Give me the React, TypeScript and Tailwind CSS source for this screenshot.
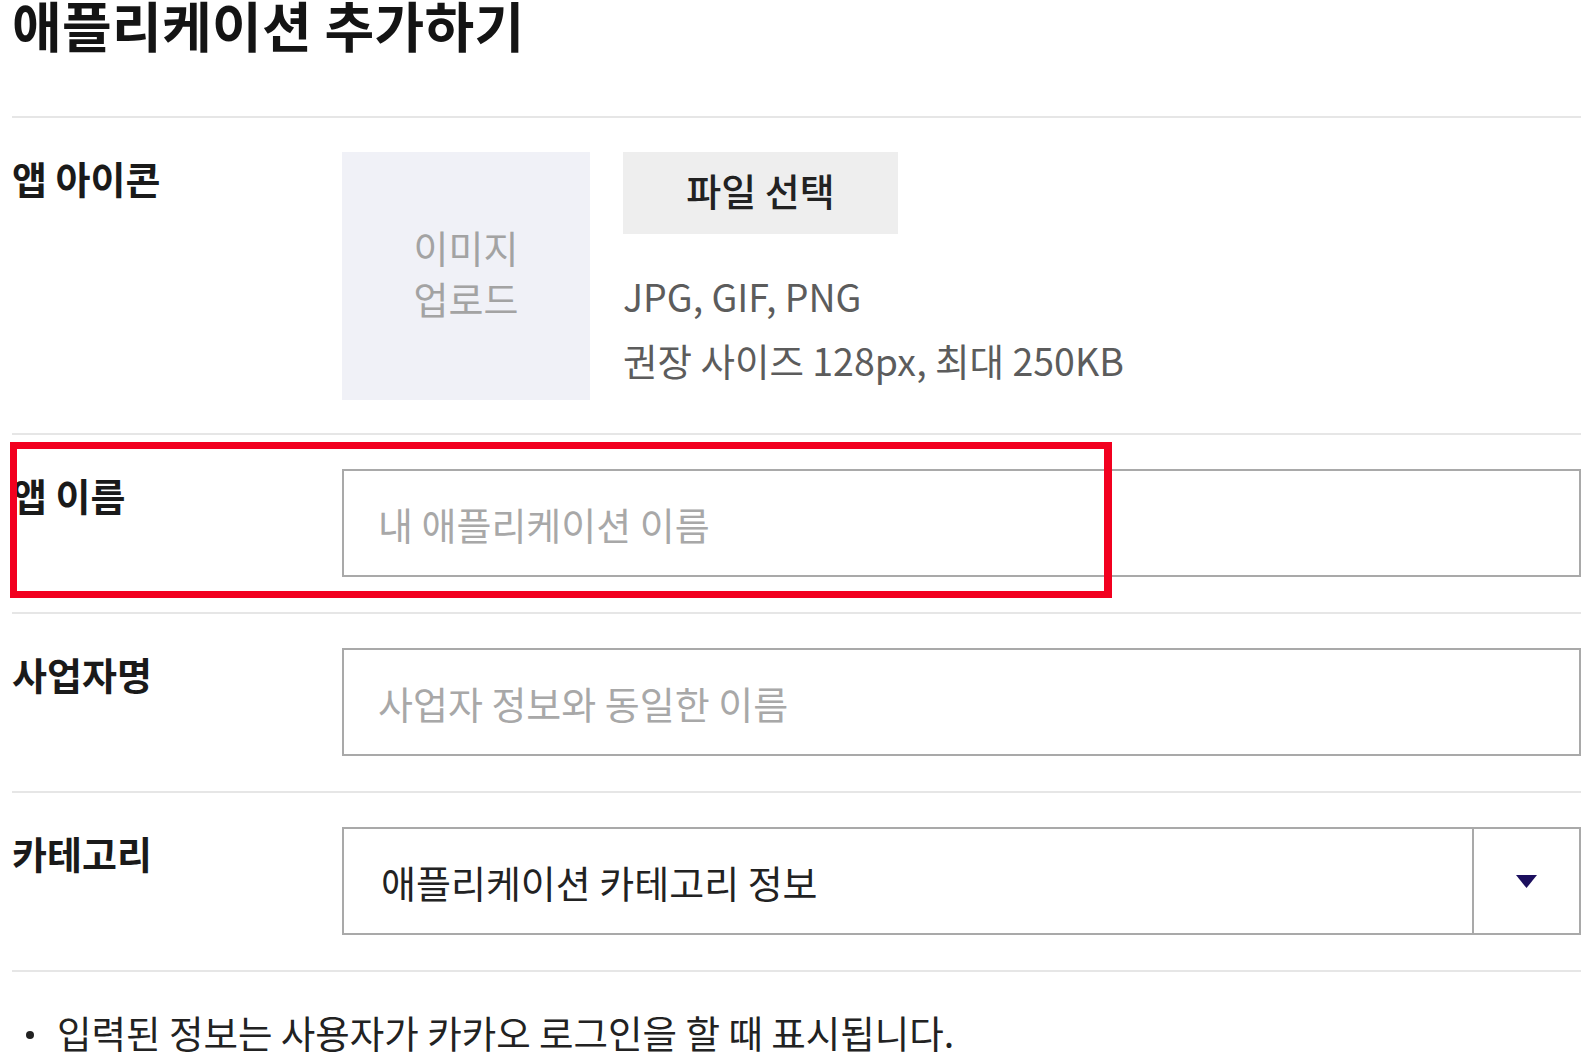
export default function App() {
  return (
    <div className="relative h-[1062px] w-[1596px] overflow-hidden bg-white font-['Noto_Sans_CJK_KR',sans-serif]">
      <div className="pl-[12px] pr-[15px]">
        {/* Title */}
        <h1 className="-mt-[3px] h-[119px] text-[54px] font-bold leading-[55px] tracking-[0.3px] text-[#141414]">
          애플리케이션 추가하기
        </h1>

        <div className="h-[2px] bg-[#e6e6e6]" />

        {/* App icon */}
        <div className="flex pt-[34px] pb-[33px]">
          <div className="w-[330px] text-[38px] font-bold leading-[51px] text-[#1a1a1a]">앱 아이콘</div>
          <div className="flex gap-[33px]">
            <div className="flex h-[248px] w-[248px] items-center justify-center bg-[#f0f1f7] pb-[8px] text-center text-[38px] leading-[51px] text-[#a3a3a3]">
              이미지
              <br />
              업로드
            </div>
            <div>
              <button className="h-[82px] w-[275px] bg-[#eeeeee] pb-[8px] text-[38px] font-medium text-[#222]">
                파일 선택
              </button>
              <p className="mt-[30px] text-[37.5px] leading-[64px] text-[#5c5c5c]">
                JPG, GIF, PNG
                <br />
                권장 사이즈 128px, 최대 250KB
              </p>
            </div>
          </div>
        </div>

        <div className="h-[2px] bg-[#e6e6e6]" />

        {/* App name */}
        <div className="flex pt-[34px] pb-[35px]">
          <div className="w-[330px] text-[38px] font-bold leading-[51px] text-[#1a1a1a]">앱 이름</div>
          <input
            className="h-[108px] flex-1 border-2 border-[#a9a9a9] px-[34px] text-[38px] text-[#222] outline-none placeholder:text-[#a8a8a8]"
            placeholder="내 애플리케이션 이름"
          />
        </div>

        <div className="h-[2px] bg-[#e6e6e6]" />

        {/* Business name */}
        <div className="flex pt-[34px] pb-[35px]">
          <div className="w-[330px] text-[38px] font-bold leading-[51px] text-[#1a1a1a]">사업자명</div>
          <input
            className="h-[108px] flex-1 border-2 border-[#a9a9a9] px-[34px] text-[38px] text-[#222] outline-none placeholder:text-[#a8a8a8]"
            placeholder="사업자 정보와 동일한 이름"
          />
        </div>

        <div className="h-[2px] bg-[#e6e6e6]" />

        {/* Category */}
        <div className="flex pt-[34px] pb-[35px]">
          <div className="w-[330px] text-[38px] font-bold leading-[51px] text-[#1a1a1a]">카테고리</div>
          <div className="flex h-[108px] flex-1 border-2 border-[#a9a9a9]">
            <div className="flex flex-1 items-center pl-[37px] text-[38px] text-[#222]">
              애플리케이션 카테고리 정보
            </div>
            <div className="flex w-[107px] items-center justify-center border-l-2 border-[#a9a9a9]">
              <svg width="21" height="13" viewBox="0 0 21 13">
                <polygon points="0,0 21,0 10.5,13" fill="#1c0f5e" />
              </svg>
            </div>
          </div>
        </div>

        <div className="h-[2px] bg-[#e6e6e6]" />

        <ul className="mt-[34px]">
          <li className="flex items-center text-[37.5px] leading-[52px] text-[#222]">
            <span className="ml-[14px] mr-[23px] mt-[6px] h-[8px] w-[8px] rounded-full bg-[#222]" />
            입력된 정보는 사용자가 카카오 로그인을 할 때 표시됩니다.
          </li>
        </ul>
      </div>

      {/* highlight */}
      <div className="absolute left-[10px] top-[442px] h-[156px] w-[1102px] border-[7px] border-r-[8px] border-[#f2001f]" />
    </div>
  );
}
